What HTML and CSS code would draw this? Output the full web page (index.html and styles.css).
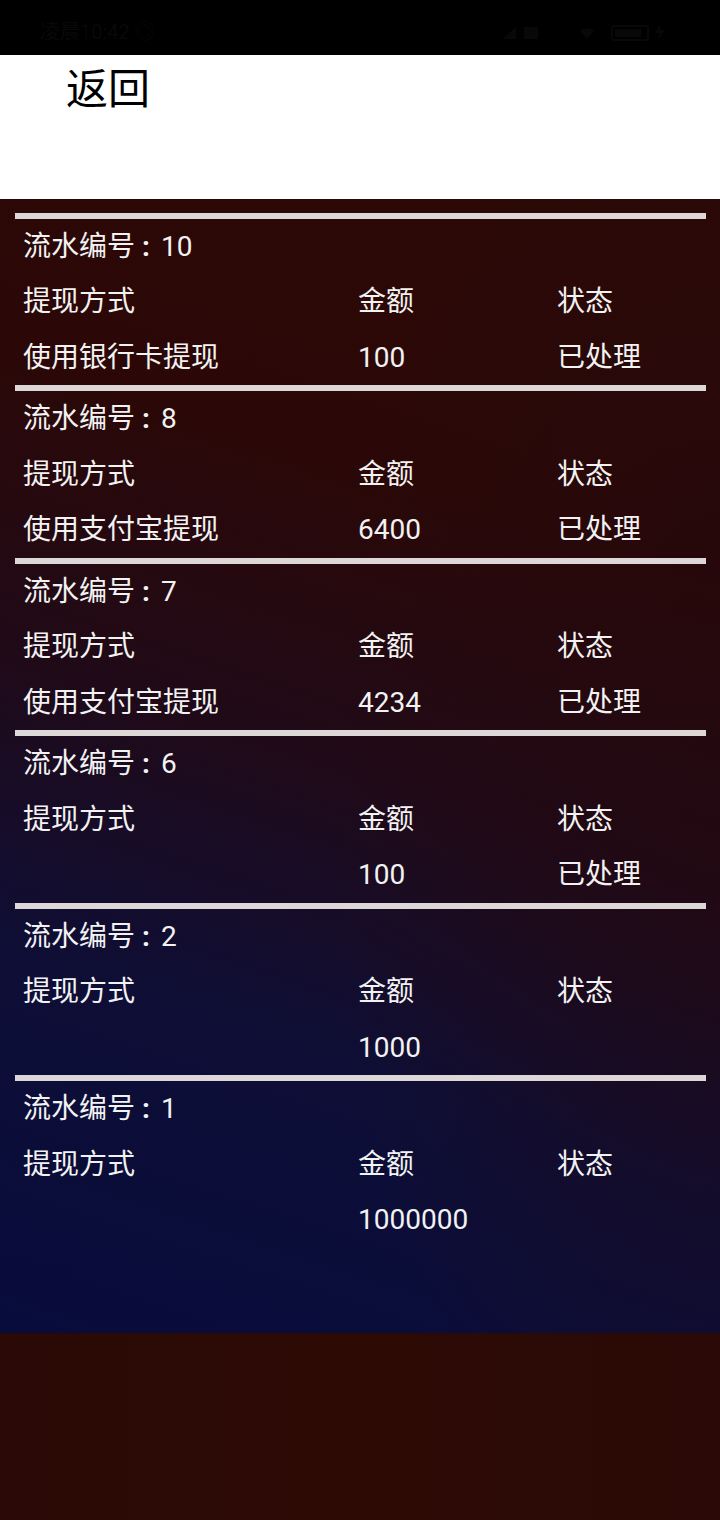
FILE: index.html
```html
<!DOCTYPE html>
<html lang="zh-CN">
<head>
<meta charset="utf-8">
<title>提现记录</title>
<link rel="stylesheet" href="styles.css">
</head>
<body>
<div class="statusbar">
  <span class="time">凌晨10:42 ◎</span>
  <span class="sys">
    <svg width="190" height="20" viewBox="0 0 190 20">
      <path d="M2 18 L16 6 L16 18 Z" fill="#080808"/>
      <rect x="24" y="6" width="14" height="12" fill="#080808"/>
      <path d="M80 10 a10 10 0 0 1 14 0 l-7 8 z" fill="#080808"/>
      <rect x="112" y="5" width="36" height="14" rx="2" fill="none" stroke="#080808" stroke-width="2"/>
      <rect x="115" y="8" width="26" height="8" fill="#080808"/>
      <path d="M160 4 L155 12 L160 12 L157 20 L165 9 L160 9 Z" fill="#080808"/>
    </svg>
  </span>
</div>
<header class="topbar">
  <span class="back">返回</span>
</header>
<main class="list">
  <section class="item">
    <div class="rule"></div>
    <div class="row"><span>流水编号<span class="colon">:</span>10</span></div>
    <div class="row grid"><span>提现方式</span><span>金额</span><span>状态</span></div>
    <div class="row grid"><span>使用银行卡提现</span><span>100</span><span>已处理</span></div>
  </section>
  <section class="item">
    <div class="rule"></div>
    <div class="row"><span>流水编号<span class="colon">:</span>8</span></div>
    <div class="row grid"><span>提现方式</span><span>金额</span><span>状态</span></div>
    <div class="row grid"><span>使用支付宝提现</span><span>6400</span><span>已处理</span></div>
  </section>
  <section class="item">
    <div class="rule"></div>
    <div class="row"><span>流水编号<span class="colon">:</span>7</span></div>
    <div class="row grid"><span>提现方式</span><span>金额</span><span>状态</span></div>
    <div class="row grid"><span>使用支付宝提现</span><span>4234</span><span>已处理</span></div>
  </section>
  <section class="item">
    <div class="rule"></div>
    <div class="row"><span>流水编号<span class="colon">:</span>6</span></div>
    <div class="row grid"><span>提现方式</span><span>金额</span><span>状态</span></div>
    <div class="row grid"><span></span><span>100</span><span>已处理</span></div>
  </section>
  <section class="item">
    <div class="rule"></div>
    <div class="row"><span>流水编号<span class="colon">:</span>2</span></div>
    <div class="row grid"><span>提现方式</span><span>金额</span><span>状态</span></div>
    <div class="row grid"><span></span><span>1000</span><span></span></div>
  </section>
  <section class="item">
    <div class="rule"></div>
    <div class="row"><span>流水编号<span class="colon">:</span>1</span></div>
    <div class="row grid"><span>提现方式</span><span>金额</span><span>状态</span></div>
    <div class="row grid"><span></span><span>1000000</span><span></span></div>
  </section>
</main>
<div class="footer"></div>
</body>
</html>
```
FILE: styles.css
```css
html, body {
  margin: 0;
  padding: 0;
}
body {
  width: 720px;
  height: 1520px;
  overflow: hidden;
  font-family: Roboto, "Noto Sans CJK SC", sans-serif;
  background: #2c0a05;
}
.statusbar {
  height: 55px;
  background: #000;
  display: flex;
  justify-content: space-between;
  align-items: center;
  padding: 6px 30px 0 40px;
  box-sizing: border-box;
  color: #080808;
  font-size: 20px;
}
.sys svg {
  display: block;
}
.topbar {
  height: 144px;
  background: #fff;
  box-sizing: border-box;
  padding: 10px 0 0 66px;
}
.back {
  font-family: "Noto Sans CJK SC", sans-serif;
  font-size: 42px;
  line-height: 42px;
  color: #000;
}
.list {
  height: 1134px;
  box-sizing: border-box;
  padding: 14px 14px 0 15px;
  background:
    radial-gradient(ellipse 55% 70% at 100% 50%, rgba(34, 8, 14, 0.6), rgba(34, 8, 14, 0) 100%),
    linear-gradient(198deg, #2c0906 0%, #2b0807 28%, #200a18 50%, #0e0e36 72%, #080c3c 100%);
  color: #f2f2f2;
  font-size: 28px;
}
.item {
  display: flex;
  flex-direction: column;
}
.rule {
  height: 6px;
  background: #ddd7d7;
}
.row {
  height: 55.47px;
  line-height: 55.47px;
  padding-left: 8px;
  white-space: nowrap;
}
.colon {
  font-weight: 700;
  margin: 0 11px 0 7px;
}
.grid {
  display: grid;
  grid-template-columns: 335px 199px 1fr;
}
.footer {
  height: 187px;
  background: linear-gradient(90deg, #2a0906 0%, #2d0a04 50%, #2a0906 100%);
}
```
